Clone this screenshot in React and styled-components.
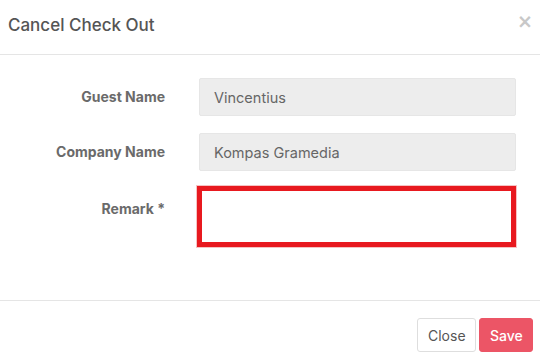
import React from "react";
import styled, { createGlobalStyle } from "styled-components";

const GlobalStyle = createGlobalStyle`
  body {
    margin: 0;
    background: #fff;
    font-family: Inter, "Liberation Sans", sans-serif;
  }
`;

const Modal = styled.div`
  width: 540px;
  height: 360px;
  background: #fff;
  display: flex;
  flex-direction: column;
`;

const Header = styled.div`
  height: 55px;
  box-sizing: border-box;
  border-bottom: 1px solid #e5e5e5;
  display: flex;
  align-items: flex-start;
  justify-content: space-between;
  padding: 13px 7px 0 8px;
`;

const Title = styled.h4`
  margin: 0;
  font-size: 17px;
  line-height: 24px;
  font-weight: 500;
  color: #555;
`;

const CloseX = styled.button`
  border: none;
  background: none;
  padding: 0;
  margin-top: -4px;
  font-size: 19px;
  line-height: 24px;
  font-weight: 700;
  color: #c8c8c8;
  font-family: "DejaVu Sans", sans-serif;
`;

const Body = styled.div`
  height: 246px;
  box-sizing: border-box;
  padding-top: 23px;
  border-bottom: 1px solid #e5e5e5;
  display: grid;
  grid-template-columns: 165px 317px;
  column-gap: 34px;
  row-gap: 17px;
  align-content: start;
`;

const Label = styled.label`
  text-align: right;
  font-size: 14px;
  font-weight: 700;
  color: #6a6a6a;
  line-height: ${(p) => (p.top ? "20px" : "38px")};
  padding-top: ${(p) => (p.top ? "11px" : "0")};
`;

const Input = styled.input`
  height: 38px;
  box-sizing: border-box;
  border: 1px solid #e6e6e6;
  border-radius: 2px;
  background: #ededed;
  padding: 0 14px;
  font-family: inherit;
  font-size: 14.5px;
  color: #666;
  outline: none;
`;

const Remark = styled.textarea`
  height: 61px;
  margin: -2px 0 0 -2px;
  box-sizing: border-box;
  border: 5px solid #e8191f;
  box-shadow: 0 0 0 1px #f6c3c3;
  border-radius: 0;
  resize: none;
  font-family: inherit;
  font-size: 14px;
  outline: none;
`;

const Footer = styled.div`
  display: flex;
  justify-content: flex-end;
  gap: 3px;
  padding: 17px 7px 0 0;
`;

const Button = styled.button`
  height: 34px;
  box-sizing: border-box;
  border-radius: 3px;
  font-family: inherit;
  font-size: 14px;
  padding: 0 ${(p) => (p.primary ? "10px" : "10px")};
  width: ${(p) => (p.primary ? "54px" : "59px")};
  border: 1px solid ${(p) => (p.primary ? "#ec5566" : "#dedede")};
  background: ${(p) => (p.primary ? "#ec5566" : "#fff")};
  color: ${(p) => (p.primary ? "#fff" : "#555")};
  font-weight: ${(p) => (p.primary ? 500 : 400)};
`;

export default function App() {
  return (
    <Modal>
      <GlobalStyle />
      <Header>
        <Title>Cancel Check Out</Title>
        <CloseX>×</CloseX>
      </Header>
      <Body>
        <Label>Guest Name</Label>
        <Input readOnly value="Vincentius" />
        <Label>Company Name</Label>
        <Input readOnly value="Kompas Gramedia" />
        <Label top>Remark *</Label>
        <Remark />
      </Body>
      <Footer>
        <Button>Close</Button>
        <Button primary>Save</Button>
      </Footer>
    </Modal>
  );
}
